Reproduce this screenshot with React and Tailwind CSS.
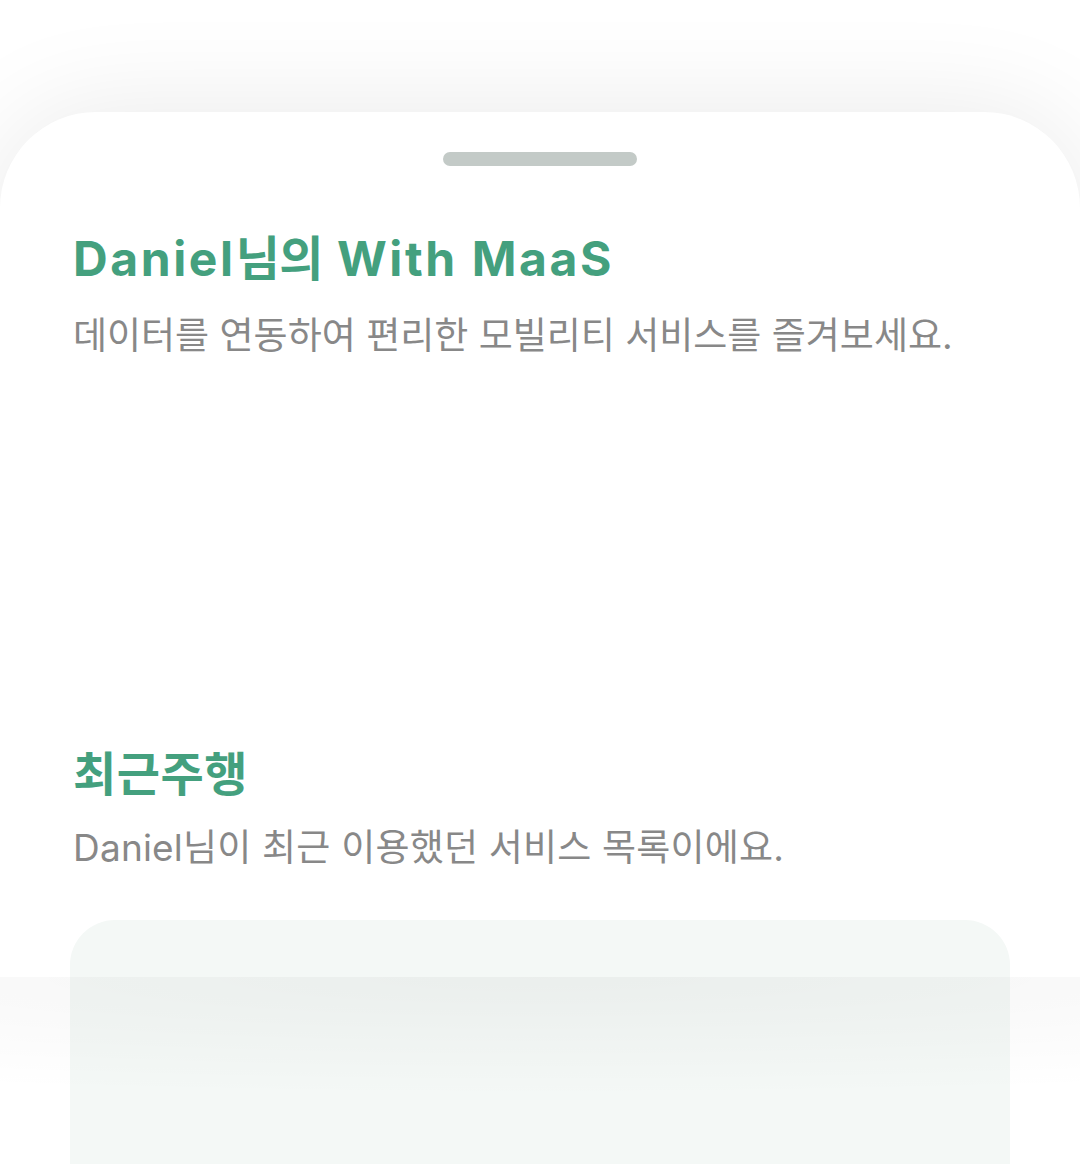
export default function App() {
  const font = { fontFamily: 'Inter, "Noto Sans CJK KR", sans-serif' };
  return (
    <div className="relative w-[1080px] h-[1164px] overflow-hidden bg-white" style={font}>
      <div className="mt-[112px] h-[1052px] bg-white rounded-t-[96px] shadow-[0_0_110px_rgba(0,0,0,0.09)] pt-[40px] px-[71px]">
        <div className="flex justify-center">
          <div className="w-[194px] h-[14px] rounded-full bg-[#c3cac7]" />
        </div>
        <h1 className="mt-[65px] text-[48px] leading-[56px] font-bold text-[#44a07e] tracking-[2.6px] ml-[2px]">
          Daniel<span className="tracking-[-0.5px]">님의</span> With MaaS
        </h1>
        <p className="mt-[25px] text-[37px] leading-[48px] text-[#888888] ml-[2px]">
          데이터를 연동하여 편리한 모빌리티 서비스를 즐겨보세요.
        </p>
        <h2 className="mt-[386px] text-[47px] leading-[56px] font-bold text-[#44a07e] ml-[2px] tracking-[0.5px]">
          최근주행
        </h2>
        <p className="mt-[22px] text-[37px] leading-[48px] text-[#888888] ml-[2px] tracking-[0.2px]">
          Daniel님이 최근 이용했던 서비스 목록이에요.
        </p>
        <div className="mt-[48px] -mx-[1px] h-[300px] rounded-[45px] bg-[#f4f8f6]" />
      </div>
      <div className="absolute left-0 right-0 top-[977px] h-[120px] bg-[radial-gradient(130%_100%_at_50%_0%,rgba(0,0,0,0.04),rgba(0,0,0,0)_100%)]" />
    </div>
  );
}
